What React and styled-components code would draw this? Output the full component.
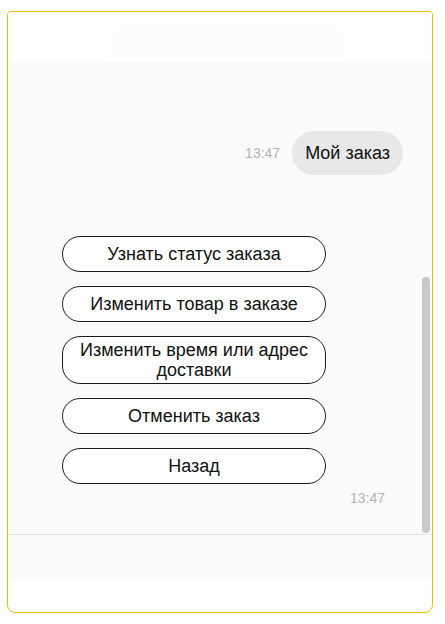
import styled, { createGlobalStyle } from 'styled-components';

const GlobalStyle = createGlobalStyle`
  body {
    margin: 0;
    background: #ffffff;
    font-family: 'Liberation Sans', Arial, sans-serif;
  }
`;

const Widget = styled.div`
  position: relative;
  margin: 11px 0 0 7px;
  width: 426px;
  height: 602px;
  box-sizing: border-box;
  border: 1.5px solid #f2c200;
  border-radius: 4px 4px 8px 8px;
  display: flex;
  flex-direction: column;
  overflow: hidden;
  background: #ffffff;
`;

const Header = styled.div`
  position: relative;
  height: 50px;
  flex-shrink: 0;
  background: #ffffff;
`;

const HeaderBlur = styled.div`
  position: absolute;
  left: 100px;
  top: 14px;
  width: 240px;
  height: 30px;
  border-radius: 20px;
  background: #fbfbfb;
  filter: blur(4px);
`;

const Messages = styled.div`
  position: relative;
  height: 473px;
  flex-shrink: 0;
  background: #fafafa;
  border-bottom: 1px solid #e2e2e2;
  box-sizing: border-box;
  padding: 69px 29px 0 54px;
  display: flex;
  flex-direction: column;
`;

const UserRow = styled.div`
  display: flex;
  justify-content: flex-end;
  align-items: center;
  gap: 12px;
`;

const Time = styled.span`
  font-size: 14px;
  color: #b4b4b4;
`;

const Bubble = styled.div`
  background: #e8e8e8;
  border-radius: 22px;
  height: 44px;
  display: flex;
  align-items: center;
  padding: 0 13px;
  font-size: 18px;
  color: #111;
`;

const BotBlock = styled.div`
  margin-top: 61px;
  width: 264px;
  display: flex;
  flex-direction: column;
  gap: 14px;
`;

const Option = styled.button`
  width: 264px;
  min-height: 36px;
  box-sizing: border-box;
  border: 1px solid #1a1a1a;
  border-radius: 18px;
  background: #ffffff;
  font-family: 'Liberation Sans', Arial, sans-serif;
  font-size: 18px;
  line-height: 20px;
  color: #111;
  padding: 3px 12px;
  display: flex;
  align-items: center;
  justify-content: center;
  text-align: center;
  cursor: pointer;
`;

const BotTime = styled(Time)`
  align-self: flex-end;
  margin: 6px 17px 0 0;
  text-align: right;
`;

const BotColumn = styled.div`
  display: flex;
  flex-direction: column;
  width: 340px;
`;

const ScrollThumb = styled.div`
  position: absolute;
  right: 2px;
  top: 215px;
  width: 8px;
  height: 256px;
  border-radius: 4px;
  background: #c8c8c8;
`;

const InputArea = styled.div`
  height: 44px;
  flex-shrink: 0;
  background: #fafafa;
`;

const options = [
  'Узнать статус заказа',
  'Изменить товар в заказе',
  'Изменить время или адрес доставки',
  'Отменить заказ',
  'Назад',
];

export default function App() {
  return (
    <>
      <GlobalStyle />
      <Widget>
        <Header>
          <HeaderBlur />
        </Header>
        <Messages>
          <UserRow>
            <Time>13:47</Time>
            <Bubble>Мой заказ</Bubble>
          </UserRow>
          <BotColumn>
            <BotBlock>
              {options.map((o) => (
                <Option key={o}>{o}</Option>
              ))}
            </BotBlock>
            <BotTime>13:47</BotTime>
          </BotColumn>
          <ScrollThumb />
        </Messages>
        <InputArea />
      </Widget>
    </>
  );
}
